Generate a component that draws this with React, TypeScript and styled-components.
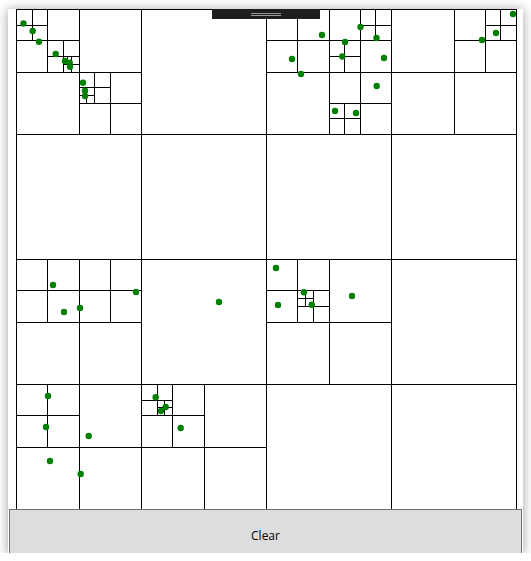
import React from "react";
import styled, { createGlobalStyle } from "styled-components";

const GlobalStyle = createGlobalStyle`
  html, body {
    margin: 0;
    padding: 0;
    background: #ffffff;
    overflow: hidden;
  }
`;

const Window = styled.div`
  position: relative;
  margin: 9px 0 0 8px;
  width: 515px;
  height: 544px;
  background: #ffffff;
  overflow: hidden;
  box-shadow: 0 1px 10px 1px rgba(0, 0, 0, 0.32);
`;

const CanvasArea = styled.div`
  height: 500px;
  padding-left: 8px;
  overflow: hidden;
`;

const ClearButton = styled.button`
  display: block;
  width: 513px;
  height: 52px;
  margin: 0 0 0 1px;
  padding: 0;
  background: #dddddd;
  border: 1px solid #707070;
  border-radius: 0;
  font-family: "Open Sans", "Noto Sans", sans-serif;
  font-size: 12px;
  color: #000000;
  cursor: default;
`;

const DebugBar = styled.div`
  position: absolute;
  top: 0;
  left: 204px;
  width: 108px;
  height: 10px;
  background: #1e1e1e;
`;

const Grip = styled.span<{ $top: number }>`
  position: absolute;
  left: 39px;
  top: ${({ $top }) => $top}px;
  width: 30px;
  height: 1px;
  background: #9a9a9a;
`;

type Pt = [number, number];

// point positions in screen pixels; canvas origin sits at (16, 9)
const SCREEN_POINTS: Pt[] = [
  [23.5, 23.5], [32.7, 31], [39, 41.7], [55.7, 54], [65, 61], [69.7, 62.7],
  [70, 66.7], [83, 82.7], [85, 90.7], [85, 96],
  [322, 35], [360.5, 27], [376.5, 38], [345, 42], [342.3, 56.5], [292, 59],
  [301, 74], [384, 58], [376.7, 86], [335, 111], [356, 113],
  [513, 14], [496, 33], [482, 40],
  [53, 285], [64, 312], [80, 308], [136, 292], [219, 302], [276, 268],
  [278, 305], [304, 292.3], [311.7, 304.7], [352, 296],
  [48, 396], [46, 427], [88.7, 436], [50, 461], [80.7, 474],
  [155.7, 397.3], [161, 411], [165.7, 407], [180.7, 428],
];

const POINTS: Pt[] = SCREEN_POINTS.map(([x, y]) => [x - 16, y - 9]);

type Seg = { x1: number; y1: number; x2: number; y2: number };

function buildTree(x: number, y: number, size: number, pts: Pt[], out: Seg[]) {
  if (pts.length < 2 || size < 2) return;
  const h = size / 2;
  const cx = x + h;
  const cy = y + h;
  out.push({ x1: cx, y1: y, x2: cx, y2: y + size });
  out.push({ x1: x, y1: cy, x2: x + size, y2: cy });
  const quads: [number, number][] = [
    [x, y],
    [cx, y],
    [x, cy],
    [cx, cy],
  ];
  for (const [qx, qy] of quads) {
    const inside = pts.filter(
      ([px, py]) => px >= qx && px < qx + h && py >= qy && py < qy + h
    );
    buildTree(qx, qy, h, inside, out);
  }
}

const snap = (v: number) => Math.round(v) + 0.5;

function QuadTree() {
  const segs: Seg[] = [
    { x1: 0, y1: 0, x2: 500, y2: 0 },
    { x1: 0, y1: 0, x2: 0, y2: 500 },
    { x1: 500, y1: 0, x2: 500, y2: 500 },
    { x1: 0, y1: 500, x2: 500, y2: 500 },
  ];
  buildTree(0, 0, 500, POINTS, segs);

  return (
    <svg width={501} height={501} style={{ display: "block" }}>
      <g stroke="#000" strokeWidth={1} shapeRendering="crispEdges">
        {segs.map((s, i) => (
          <line
            key={i}
            x1={s.x1 === s.x2 ? snap(s.x1) : Math.round(s.x1)}
            x2={s.x1 === s.x2 ? snap(s.x2) : Math.round(s.x2) + 1}
            y1={s.y1 === s.y2 ? snap(s.y1) : Math.round(s.y1)}
            y2={s.y1 === s.y2 ? snap(s.y2) : Math.round(s.y2) + 1}
          />
        ))}
      </g>
      <g fill="#008000">
        {POINTS.map(([x, y], i) => (
          <circle key={i} cx={x} cy={y} r={3.2} />
        ))}
      </g>
    </svg>
  );
}

export default function App() {
  return (
    <>
      <GlobalStyle />
      <Window>
        <CanvasArea>
          <QuadTree />
        </CanvasArea>
        <ClearButton>Clear</ClearButton>
        <DebugBar>
          <Grip $top={4} />
          <Grip $top={6} />
        </DebugBar>
      </Window>
    </>
  );
}
